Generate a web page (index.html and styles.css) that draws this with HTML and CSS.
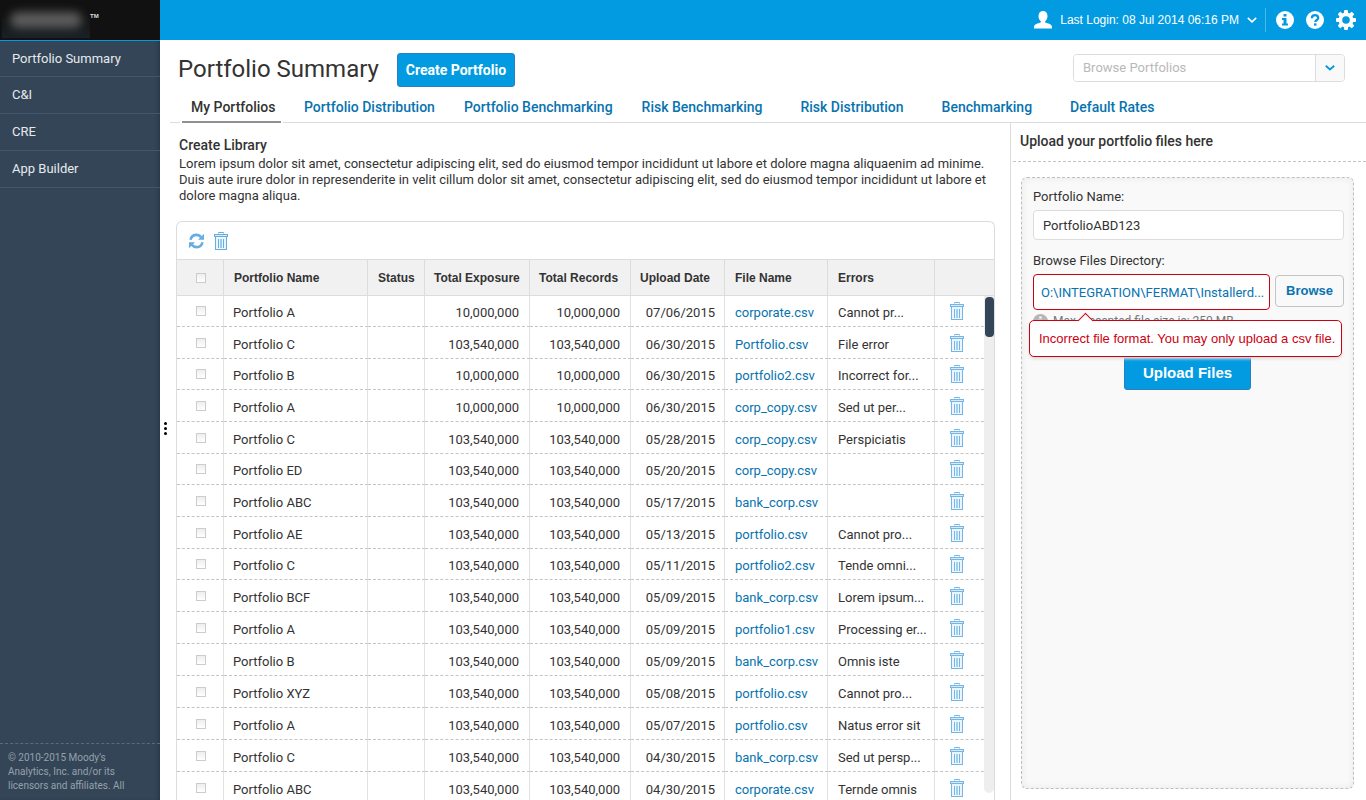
FILE: index.html
```html
<!DOCTYPE html>
<html lang="en">
<head>
<meta charset="utf-8">
<title>Portfolio Summary</title>
<link rel="stylesheet" href="styles.css">
</head>
<body>
<svg class="defs" aria-hidden="true">
  <symbol id="trash" viewBox="0 0 14 18">
    <rect x="1.5" y="4.5" width="11" height="13" fill="#eaf5fd" stroke="currentColor"/>
    <path d="M4.5 1.5V.5h5v1" fill="none" stroke="currentColor"/>
    <rect x=".5" y="2.5" width="13" height="2" fill="#d6eafa" stroke="currentColor"/>
    <path d="M4.500 7v9M9.500 7v9" stroke="currentColor"/>
    <path d="M7 7v9" stroke="currentColor" stroke-width="2" opacity=".6"/>
  </symbol>
</svg>
<div class="app">
  <aside class="sidebar">
    <div class="brand"><span class="brand-blur"></span><span class="brand-tm">TM</span></div>
    <nav class="side-nav">
      <a href="#">Portfolio Summary</a>
      <a href="#">C&amp;I</a>
      <a href="#">CRE</a>
      <a href="#">App Builder</a>
    </nav>
    <footer class="legal">© 2010-2015 Moody’s<br>Analytics, Inc. and/or its<br>licensors and affiliates. All</footer>
  </aside>
  <div class="page">
    <header class="topbar">
      <button class="user" type="button">
        <svg width="18" height="18" viewBox="0 0 18 18"><path fill="#fff" d="M9 0c2.600 0 4.500 1.900 4.500 5 0 2.300-1 4.300-2.300 5.300v1.200c2.800.8 6.800 2 6.800 4.200V17.500H0v-1.800c0-2.200 4-3.400 6.800-4.200v-1.200C5.500 9.300 4.500 7.300 4.500 5 4.500 1.900 6.400 0 9 0z"/></svg>
        <span>Last Login: 08 Jul 2014 06:16 PM</span>
        <svg width="10" height="6" viewBox="0 0 10 6"><path d="M.8.8 5 4.800 9.200.8" fill="none" stroke="#fff" stroke-width="1.600"/></svg>
      </button>
      <button class="icon-btn" type="button" aria-label="Information">
        <svg width="18" height="18" viewBox="0 0 18 18"><circle cx="9" cy="9" r="9" fill="#fff"/><path fill="#029be2" d="M7.500 3h3v2.500h-3zM6 7h4.500v5.500H12v2H6v-2h1.500V9H6z"/></svg>
      </button>
      <button class="icon-btn" type="button" aria-label="Help">
        <svg width="18" height="18" viewBox="0 0 18 18"><circle cx="9" cy="9" r="9" fill="#fff"/><path d="M5.900 7.200C5.900 5.200 7.200 4.200 9 4.200s3.200 1 3.200 2.700c0 2-2.900 2.200-2.900 4.200" fill="none" stroke="#029be2" stroke-width="2.300"/><path fill="#029be2" d="M8 12.300h2.500v2.400H8z"/></svg>
      </button>
      <button class="icon-btn" type="button" aria-label="Settings">
        <svg width="20" height="20" viewBox="0 0 20 20"><g fill="#fff"><rect x="8" y="0" width="4" height="20" rx="1"/><rect x="8" y="0" width="4" height="20" rx="1" transform="rotate(45 10 10)"/><rect x="8" y="0" width="4" height="20" rx="1" transform="rotate(90 10 10)"/><rect x="8" y="0" width="4" height="20" rx="1" transform="rotate(135 10 10)"/><circle cx="10" cy="10" r="7.500"/></g><circle cx="10" cy="10" r="3.800" fill="#029be2"/></svg>
      </button>
    </header>
    <div class="title-row">
      <h1>Portfolio Summary</h1>
      <button class="primary create" type="button">Create Portfolio</button>
      <div class="combo">
        <input type="text" placeholder="Browse Portfolios" aria-label="Browse Portfolios">
        <button type="button" aria-label="Open list"><svg width="10" height="6" viewBox="0 0 10 6"><path d="M.8.8 5 4.500 9.200.8" fill="none" stroke="#029be2" stroke-width="1.800"/></svg></button>
      </div>
    </div>
    <nav class="tabs">
      <a class="active" href="#">My Portfolios</a>
      <a href="#">Portfolio Distribution</a>
      <a href="#">Portfolio Benchmarking</a>
      <a href="#">Risk Benchmarking</a>
      <a class="wide" href="#">Risk Distribution</a>
      <a class="wide" href="#">Benchmarking</a>
      <a class="wide" href="#">Default Rates</a>
    </nav>
    <div class="columns">
      <main class="library">
        <h2>Create Library</h2>
        <p>Lorem ipsum dolor sit amet, consectetur adipiscing elit, sed do eiusmod tempor incididunt ut labore et dolore magna aliquaenim ad minime. Duis aute irure dolor in represenderite in velit cillum dolor sit amet, consectetur adipiscing elit, sed do eiusmod tempor incididunt ut labore et dolore magna aliqua.</p>
        <section class="grid">
          <div class="toolbar">
            <button type="button" aria-label="Refresh"><svg width="15" height="16" viewBox="0 0 15 16"><g fill="none" stroke="currentColor" stroke-width="2.600"><path d="M1.500 6.800C2.200 3.800 4.500 1.900 7.500 1.900c2 0 3.600.8 4.700 2.300"/><path d="M13.500 9.200c-.7 3-3 4.900-6 4.900-2 0-3.600-.8-4.700-2.300"/></g><path fill="currentColor" d="M15 .8v6H9zM0 15.200v-6h6z"/></svg></button>
            <button type="button" aria-label="Delete selected"><svg width="14" height="18"><use href="#trash"/></svg></button>
          </div>
          <div class="table-wrap">
          <table>
            <colgroup><col class="c-check"><col class="c-name"><col class="c-status"><col class="c-exp"><col class="c-rec"><col class="c-date"><col class="c-file"><col><col class="c-del"></colgroup>
            <thead><tr><th><input type="checkbox" aria-label="Select all"></th><th>Portfolio Name</th><th>Status</th><th>Total Exposure</th><th>Total Records</th><th>Upload Date</th><th>File Name</th><th>Errors</th><th></th></tr></thead>
            <tbody id="rows"></tbody>
          </table>
          <div class="scroll-track"><div class="scroll-thumb"></div></div>
          </div>
        </section>
        <button class="splitter" type="button" aria-label="Collapse sidebar"><i></i><i></i><i></i></button>
      </main>
      <aside class="upload">
        <h2>Upload your portfolio files here</h2>
        <form class="drop">
          <label for="pname">Portfolio Name:</label>
          <input class="text" id="pname" type="text" value="PortfolioABD123">
          <label for="pfile">Browse Files Directory:</label>
          <div class="file-row">
            <input class="text invalid" id="pfile" type="text" value="O:\INTEGRATION\FERMAT\Installerd...">
            <button class="browse" type="button">Browse</button>
            <div class="error" role="alert">Incorrect file format. You may only upload a csv file.</div>
          </div>
          <div class="hint"><svg width="15" height="15" viewBox="0 0 18 18"><circle cx="9" cy="9" r="9" fill="#b5b5b5"/><path fill="#f9f9f9" d="M7.500 3h3v2.500h-3zM6 7h4.500v5.500H12v2H6v-2h1.500V9H6z"/></svg>Max. accepted file size is: 250 MB</div>
          <button class="primary send" type="button">Upload Files</button>
        </form>
      </aside>
    </div>
  </div>
</div>
<script src="rows.js"></script>
</body>
</html>
```

FILE: rows.js
```js
const small = "10,000,000";
const large = "103,540,000";
const rows = [
  ["Portfolio A", small, "07/06/2015", "corporate.csv", "Cannot pr..."],
  ["Portfolio C", large, "06/30/2015", "Portfolio.csv", "File error"],
  ["Portfolio B", small, "06/30/2015", "portfolio2.csv", "Incorrect for..."],
  ["Portfolio A", small, "06/30/2015", "corp_copy.csv", "Sed ut per..."],
  ["Portfolio C", large, "05/28/2015", "corp_copy.csv", "Perspiciatis"],
  ["Portfolio ED", large, "05/20/2015", "corp_copy.csv", ""],
  ["Portfolio ABC", large, "05/17/2015", "bank_corp.csv", ""],
  ["Portfolio AE", large, "05/13/2015", "portfolio.csv", "Cannot pro..."],
  ["Portfolio C", large, "05/11/2015", "portfolio2.csv", "Tende omni..."],
  ["Portfolio BCF", large, "05/09/2015", "bank_corp.csv", "Lorem ipsum..."],
  ["Portfolio A", large, "05/09/2015", "portfolio1.csv", "Processing er..."],
  ["Portfolio B", large, "05/09/2015", "bank_corp.csv", "Omnis iste"],
  ["Portfolio XYZ", large, "05/08/2015", "portfolio.csv", "Cannot pro..."],
  ["Portfolio A", large, "05/07/2015", "portfolio.csv", "Natus error sit"],
  ["Portfolio C", large, "04/30/2015", "bank_corp.csv", "Sed ut persp..."],
  ["Portfolio ABC", large, "04/30/2015", "corporate.csv", "Ternde omnis"]
];
document.getElementById("rows").innerHTML = rows.map(([name, amount, date, file, error]) => `
  <tr><td><input type="checkbox" aria-label="Select ${name}"></td><td>${name}</td><td></td>
  <td class="num">${amount}</td><td class="num">${amount}</td><td class="num">${date}</td>
  <td><a href="#">${file}</a></td><td>${error}</td>
  <td><button type="button" aria-label="Delete"><svg width="14" height="18"><use href="#trash"/></svg></button></td></tr>`).join("");
```

FILE: styles.css
```css
* { box-sizing: border-box; }
body { margin: 0; font: 13px/16px Roboto, sans-serif; color: #333; background: #fff; }
button, input { font: inherit; color: inherit; margin: 0; }
button { border: 0; padding: 0; background: none; }
a { text-decoration: none; color: #0873b0; }
h1, h2, p { margin: 0; font-weight: 400; }
svg { display: block; }
.defs { display: none; }

.app { display: flex; height: 100vh; overflow: hidden; }
.page { flex: 1; min-width: 0; display: flex; flex-direction: column; }

.sidebar { width: 160px; display: flex; flex-direction: column; background: #344557; box-shadow: inset -3px 0 4px -2px #26333f; }
.brand { height: 41px; display: flex; background: #111; border-bottom: 1px solid #029be2; padding-left: 2px; color: #ddd; }
.brand-blur { width: 88px; height: 38px; padding: 12px 8px; overflow: hidden; background: linear-gradient(#111 40%, #1a2126); }
.brand-blur::before { content: ""; display: block; height: 16px; border-radius: 8px; background: #5c5c5c; filter: blur(5px); }
.brand-tm { font: bold 6px/10px "Liberation Sans", sans-serif; padding-top: 11px; }
.side-nav { flex: 1; }
.side-nav a { display: block; height: 37px; padding: 10px 12px; color: #e6eaee; border-bottom: 1px solid #44566a; font-size: 13px; }
.side-nav a:first-child { height: 36px; }
.legal { height: 57px; padding: 7px 8px; border-top: 1px dashed #5c6b7a; font-size: 10px; line-height: 14px; color: #96a1ac; white-space: nowrap; }

.topbar { height: 40px; flex: none; display: flex; align-items: center; justify-content: flex-end; gap: 12px; padding-right: 10px; background: #029be2; color: #fff; }
.user { display: flex; align-items: center; gap: 8px; height: 24px; padding-right: 8px; margin-right: -2px; border-right: 1px solid #46b9ee; font: 12px/16px "Liberation Sans", sans-serif; }

.title-row { display: flex; align-items: center; flex: none; height: 60px; padding: 0 21px 0 18px; }
h1 { font-size: 24px; line-height: 32px; margin-bottom: 2px; }
.primary { background: #029be2; color: #fff; border: 1px solid #2a7fc0; border-radius: 3px; }
.create { height: 34px; width: 118px; margin-left: 18px; font-size: 14px; font-weight: 700; }
.combo { display: flex; width: 272px; height: 28px; margin-left: auto; margin-bottom: 4px; border: 1px solid #dcdcdc; border-radius: 4px; overflow: hidden; }
.combo input { flex: 1; min-width: 0; border: 0; padding: 0 9px; background: #fff; outline: 0; }
.combo input::placeholder { color: #b9b9b9; }
.combo button { width: 29px; display: grid; place-items: center; border-left: 1px solid #dcdcdc; background: #f9f9f9; }

.tabs { display: flex; flex: none; height: 23px; margin-left: 10px; padding-left: 12px; border-bottom: 1px solid #dcdcdc; font-size: 14px; line-height: 14px; font-weight: 500; }
.tabs a { margin-left: 29px; }
.tabs a.wide { margin-left: 38px; }
.tabs .active { margin: 0 -6px 0 0; width: 99px; height: 23px; padding-left: 9px; color: #333; border-bottom: 2px solid #919191; box-shadow: -2px 0 #fff, 2px 0 #fff; }

.columns { flex: 1; min-height: 0; display: flex; }
.library { flex: 1; min-width: 0; position: relative; padding: 14px 0 0 16px; display: flex; flex-direction: column; }
.library h2 { padding-left: 3px; font-size: 14px; line-height: 16px; font-weight: 500; }
.library p { margin: 3px 12px 17px 3px; }
.grid { flex: 1; min-height: 0; margin-right: 15px; border: 1px solid #dcdcdc; border-bottom: 0; border-radius: 6px 6px 0 0; overflow: hidden; }
.toolbar { display: flex; align-items: center; gap: 10px; height: 37px; padding-left: 12px; color: #66ade0; }
.table-wrap { position: relative; }
table { width: 100%; table-layout: fixed; border-collapse: separate; border-spacing: 0; }
.c-check { width: 47px; }
.c-name { width: 144px; }
.c-status { width: 57px; }
.c-exp { width: 105px; }
.c-rec { width: 101px; }
.c-date { width: 94px; }
.c-file { width: 103px; }
.c-del { width: 59px; }
th { height: 37px; padding: 0; text-align: left; padding-left: 10px; background: #f1f1f1; border: solid #dcdcdc; border-width: 1px 1px 1px 0; font: bold 12px/16px "Liberation Sans", sans-serif; white-space: nowrap; }
th:nth-child(4), th:nth-child(5), th:nth-child(6) { padding-left: 9px; }
td { height: 32px; padding: 4px 10px 0 9px; border-right: 1px solid #e2e2e2; border-bottom: 1px dashed #c4c4c4; white-space: nowrap; }
tr:first-child td, tr:nth-child(3n):nth-child(-n+9) td { height: 31px; }
td:nth-child(n+7) { padding-left: 10px; padding-right: 0; }
th:last-child, td:last-child { border-right: 0; }
td:last-child { padding: 0 0 0 15px; color: #74b6e6; }
td:last-child button { display: block; color: inherit; }
th:first-child, td:first-child { padding: 0; text-align: center; }
.num { text-align: right; }
td.num:nth-child(6) { padding-right: 9px; }
input[type=checkbox] { appearance: none; display: block; width: 10px; height: 10px; border: 1px solid #ccc; background: linear-gradient(#eee, #fff); margin: 0 0 0 19px; }
.scroll-track { position: absolute; top: 37px; right: 0; width: 10px; height: 497px; background: #eee; border-radius: 0 0 5px 5px; }
.scroll-thumb { width: 9px; height: 40px; margin: 1px 0 0 1px; border-radius: 4px; background: #344557; }
.splitter { position: absolute; left: 4px; top: 299px; display: grid; gap: 2px; }
.splitter i { width: 3px; height: 3px; border-radius: 50%; background: #000; }

.upload { width: 356px; display: flex; flex-direction: column; border-left: 1px solid #dcdcdc; padding: 0 0 11px 2px; }
.upload h2 { height: 39px; padding: 10px 7px; border-bottom: 1px dashed #c4c4c4; font-size: 14px; font-weight: 500; }
.drop { flex: 1; display: flex; flex-direction: column; margin: 15px 12px 0 8px; padding: 11px 9px 0 11px; border: 1px dashed #bfbfbf; border-radius: 6px; background: #f9f9f9; box-shadow: inset 0 0 6px #e8e8e8; }
.drop .text { height: 30px; margin: 5px 0 13px; padding: 0 9px; border: 1px solid #dcdcdc; border-radius: 4px; background: #fff; }
.file-row { position: relative; display: flex; align-items: center; gap: 5px; margin-top: 5px; }
.drop .file-row .text { flex: 1; min-width: 0; height: 36px; margin: 0; padding: 0 3px 0 7px; border-color: #cc0010; color: #0873b0; }
.browse { width: 69px; height: 32px; margin-bottom: 2px; border: 1px solid #c4c4c4; border-radius: 4px; color: #0873b0; font: bold 13px/16px "Liberation Sans", sans-serif; }
.hint { display: flex; align-items: center; gap: 5px; margin-top: 3px; font-size: 12px; color: #777; }
.send { align-self: center; width: 127px; height: 35px; margin: 26px 2px 0 0; font: bold 15px/18px "Liberation Sans", sans-serif; }
.error { position: absolute; z-index: 1; top: 46px; left: -4px; right: 2px; height: 37px; padding: 10px 9px; border: 1px solid #cc0010; border-radius: 5px; background: #fff; color: #cc0010; font: 13px/16px "Liberation Sans", sans-serif; white-space: nowrap; box-shadow: 0 2px 3px #ddd; }
.error::before { content: ""; position: absolute; top: -6px; left: 50px; width: 10px; height: 10px; border: solid #cc0010; border-width: 1px 0 0 1px; background: #fff; transform: rotate(45deg); }
```
